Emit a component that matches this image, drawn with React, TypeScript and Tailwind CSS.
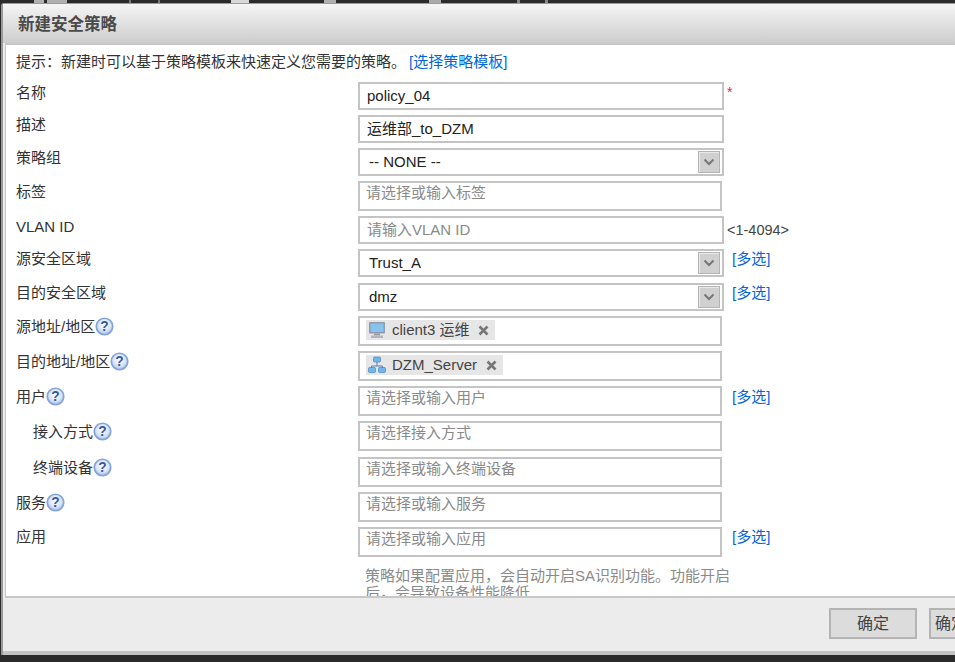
import type { ReactNode } from "react";

const FONT = "font-['Liberation_Sans','Noto_Sans_CJK_SC',sans-serif]";

function Help() {
  return (
    <svg width="19" height="19" viewBox="0 0 18 18" className="shrink-0">
      <defs>
        <radialGradient id="hb" cx="50%" cy="40%" r="60%">
          <stop offset="0%" stopColor="#ffffff" />
          <stop offset="65%" stopColor="#d8e3f5" />
          <stop offset="100%" stopColor="#9db8e4" />
        </radialGradient>
      </defs>
      <circle cx="9" cy="9" r="7.8" fill="url(#hb)" stroke="#84a5db" strokeWidth="1.6" />
      <text x="9" y="13.5" textAnchor="middle" fontSize="13" fontWeight="700" fill="#34599f" fontFamily="Liberation Sans">
        ?
      </text>
    </svg>
  );
}

function Caret() {
  return (
    <span className="flex h-[22px] w-[22px] items-center justify-center border border-[#b5b5b5] bg-[#d0d0d0] shadow-[inset_1px_1px_0_#e8e8e8]">
      <svg width="12" height="8" viewBox="0 0 12 8">
        <path d="M1.5 1.5 L6 6 L10.5 1.5" fill="none" stroke="#777" strokeWidth="2" />
      </svg>
    </span>
  );
}

function Field({ children, className }: { children: ReactNode; className: string }) {
  return <div className={`flex items-center border-2 border-[#c4c4c4] bg-white ${className}`}>{children}</div>;
}

function Text({ value }: { value: string }) {
  return <Field className="h-[28px] w-[366px] pl-[7px] text-[15px] text-[#222]">{value}</Field>;
}

function Hint({ value }: { value: string }) {
  return <Field className="h-[28px] w-[366px] pl-[7px] text-[15px] text-[#8a8a8a]">{value}</Field>;
}

function Tags({ value }: { value: string }) {
  return (
    <div className="h-[30px] w-[364px] border-2 border-[#c4c4c4] bg-white pl-[6px] pt-[1px] text-[15px] leading-[18px] text-[#8a8a8a]">
      {value}
    </div>
  );
}

function Select({ value }: { value: string }) {
  return (
    <Field className="h-[28px] w-[366px] justify-between pl-[9px] pr-[2px] text-[15px] text-[#222]">
      {value}
      <Caret />
    </Field>
  );
}

function Chip({ icon, label, gap }: { icon: ReactNode; label: string; gap: string }) {
  return (
    <div className="h-[30px] w-[364px] border-2 border-[#c4c4c4] bg-white pl-[6px] pt-[2px]">
      <span className="inline-flex h-[20px] items-center bg-[#e6e6e6] pl-[2px] pr-[6px] text-[15px] text-[#444]">
        {icon}
        <span className="ml-[6px]">{label}</span>
        <svg width="11" height="11" viewBox="0 0 11 11" className={gap}>
          <path d="M1.5 1.5 L9.5 9.5 M9.5 1.5 L1.5 9.5" stroke="#777" strokeWidth="2.6" />
        </svg>
      </span>
    </div>
  );
}

function Monitor() {
  return (
    <svg width="18" height="18" viewBox="0 0 18 18">
      <rect x="1" y="1" width="16" height="11.5" rx="1" fill="#8f9bab" />
      <rect x="2.5" y="2.5" width="13" height="8.5" fill="#86c4ee" />
      <rect x="6" y="12.5" width="6" height="2" fill="#9a9aa6" />
      <rect x="3" y="14.5" width="12" height="2.5" fill="#b4b4c0" />
    </svg>
  );
}

function Network() {
  return (
    <svg width="18" height="18" viewBox="0 0 18 18">
      <path d="M9 6 V10 M3.5 13 V10 H14.5 V13" fill="none" stroke="#5a7fb0" strokeWidth="1" />
      <rect x="5.5" y="1" width="7" height="5" rx="1" fill="#6fb7ea" stroke="#3a78b5" strokeWidth="0.6" />
      <rect x="0.5" y="11.5" width="7" height="5" rx="1" fill="#6fb7ea" stroke="#3a78b5" strokeWidth="0.6" />
      <rect x="10.5" y="11.5" width="7" height="5" rx="1" fill="#6fb7ea" stroke="#3a78b5" strokeWidth="0.6" />
    </svg>
  );
}

function More({ className }: { className: string }) {
  return <a className={`text-[15px] leading-[18px] text-[#0066dd] ${className}`}>[多选]</a>;
}

function Row({
  label,
  help,
  indent,
  top,
  className,
  children,
}: {
  label: string;
  help?: boolean;
  indent?: boolean;
  top: string;
  className: string;
  children: ReactNode;
}) {
  return (
    <div className={`flex items-start ${className}`}>
      <div className={`flex w-[352px] shrink-0 items-center text-[15px] leading-[18px] text-[#333] ${top} ${indent ? "pl-[27px]" : "pl-[10px]"}`}>
        {label}
        {help && <Help />}
      </div>
      {children}
    </div>
  );
}

export default function App() {
  return (
    <div className={`flex h-[662px] w-[955px] flex-col overflow-hidden bg-[#2b2b2b] ${FONT}`}>
      {/* bits of the page behind the dialog */}
      <div className="flex h-[3px] shrink-0">
        <div className="ml-[34px] w-[10px] bg-[#b0b0b0]" />
        <div className="ml-[3px] w-[20px] bg-[#b0b0b0]" />
        <div className="ml-[62px] w-[2px] bg-[#777]" />
        <div className="ml-[27px] w-[2px] bg-[#777]" />
        <div className="ml-[71px] w-[18px] bg-[#d8d8d8]" />
        <div className="ml-[75px] w-[12px] bg-[#b0b0b0]" />
        <div className="ml-[93px] w-[12px] bg-[#aaa]" />
        <div className="ml-[76px] w-[3px] bg-[#888]" />
        <div className="ml-[25px] w-[3px] bg-[#888]" />
      </div>

      <div className="ml-[1px] flex h-[652px] shrink-0 flex-col rounded-tl-[3px] border-l-2 border-t border-[#9a9a9a] bg-[#ececec]">
        <div className="flex h-[39px] shrink-0 items-center bg-gradient-to-b from-[#f5f5f5] to-[#cdcdcd] pl-[15px] pt-[1px] text-[16.5px] font-bold text-[#4a4a4a]">
          新建安全策略
        </div>

        <div className="ml-[2px] flex h-[555px] shrink-0 flex-col overflow-hidden border-b-2 border-l border-t-2 border-[#c8c8c8] bg-white">
          <div className="flex h-[37px] shrink-0 items-start pl-[10px] pt-[8px] text-[15px] leading-[18px] text-[#333]">
            提示：新建时可以基于策略模板来快速定义您需要的策略。
            <a className="ml-[3px] text-[#0066dd]">[选择策略模板]</a>
          </div>

          <Row label="名称" top="pt-[2px]" className="h-[33px] shrink-0">
            <Text value="policy_04" />
            <span className="ml-[3px] text-[14px] leading-[20px] text-[#ee2244]">*</span>
          </Row>
          <Row label="描述" top="pt-[1px]" className="h-[33px] shrink-0">
            <Text value="运维部_to_DZM" />
          </Row>
          <Row label="策略组" top="pt-[1px]" className="h-[33px] shrink-0">
            <Select value="-- NONE --" />
          </Row>
          <Row label="标签" top="pt-[2px]" className="h-[35px] shrink-0">
            <Tags value="请选择或输入标签" />
          </Row>
          <Row label="VLAN ID" top="pt-[2px]" className="h-[33px] shrink-0">
            <Hint value="请输入VLAN ID" />
            <span className="ml-[3px] pt-[5px] text-[14.5px] leading-[18px] text-[#444]">&lt;1-4094&gt;</span>
          </Row>
          <Row label="源安全区域" top="pt-[1px]" className="h-[34px] shrink-0">
            <Select value="Trust_A" />
            <More className="ml-[8px] mt-[1px]" />
          </Row>
          <Row label="目的安全区域" top="pt-[1px]" className="h-[33px] shrink-0">
            <Select value="dmz" />
            <More className="ml-[8px] mt-[1px]" />
          </Row>
          <Row label="源地址/地区" help top="pt-[1px]" className="h-[35px] shrink-0">
            <Chip icon={<Monitor />} label="client3 运维" gap="ml-[8px]" />
          </Row>
          <Row label="目的地址/地区" help top="pt-[1px]" className="h-[35px] shrink-0">
            <Chip icon={<Network />} label="DZM_Server" gap="ml-[9px]" />
          </Row>
          <Row label="用户" help top="pt-[1px]" className="h-[35px] shrink-0">
            <Tags value="请选择或输入用户" />
            <More className="ml-[10px] mt-[2px]" />
          </Row>
          <Row label="接入方式" help indent top="pt-[1px]" className="h-[36px] shrink-0">
            <Tags value="请选择接入方式" />
          </Row>
          <Row label="终端设备" help indent top="pt-[1px]" className="h-[35px] shrink-0">
            <Tags value="请选择或输入终端设备" />
          </Row>
          <Row label="服务" help top="pt-[1px]" className="h-[35px] shrink-0">
            <Tags value="请选择或输入服务" />
          </Row>
          <Row label="应用" top="pt-[1px]" className="h-[40px] shrink-0">
            <Tags value="请选择或输入应用" />
            <More className="ml-[10px] mt-[1px]" />
          </Row>
          <div className="ml-[359px] w-[370px] text-[15px] leading-[17px] text-[#8a8a8a]">
            策略如果配置应用，会自动开启SA识别功能。功能开启后，会导致设备性能降低
          </div>
        </div>

        <div className="flex flex-1 items-start justify-end overflow-hidden pt-[10px]">
          <button className="h-[31px] w-[88px] shrink-0 border-2 border-[#b4b4b4] bg-[#dcdcdc] text-[16px] text-[#444]">确定</button>
          <button className="ml-[12px] mr-[-62px] h-[31px] w-[88px] shrink-0 border-2 border-[#b4b4b4] bg-[#dcdcdc] pl-[4px] text-left text-[16px] text-[#444]">确定</button>
        </div>
        <div className="h-[4px] shrink-0 bg-[#c4c4c4]" />
      </div>
    </div>
  );
}
